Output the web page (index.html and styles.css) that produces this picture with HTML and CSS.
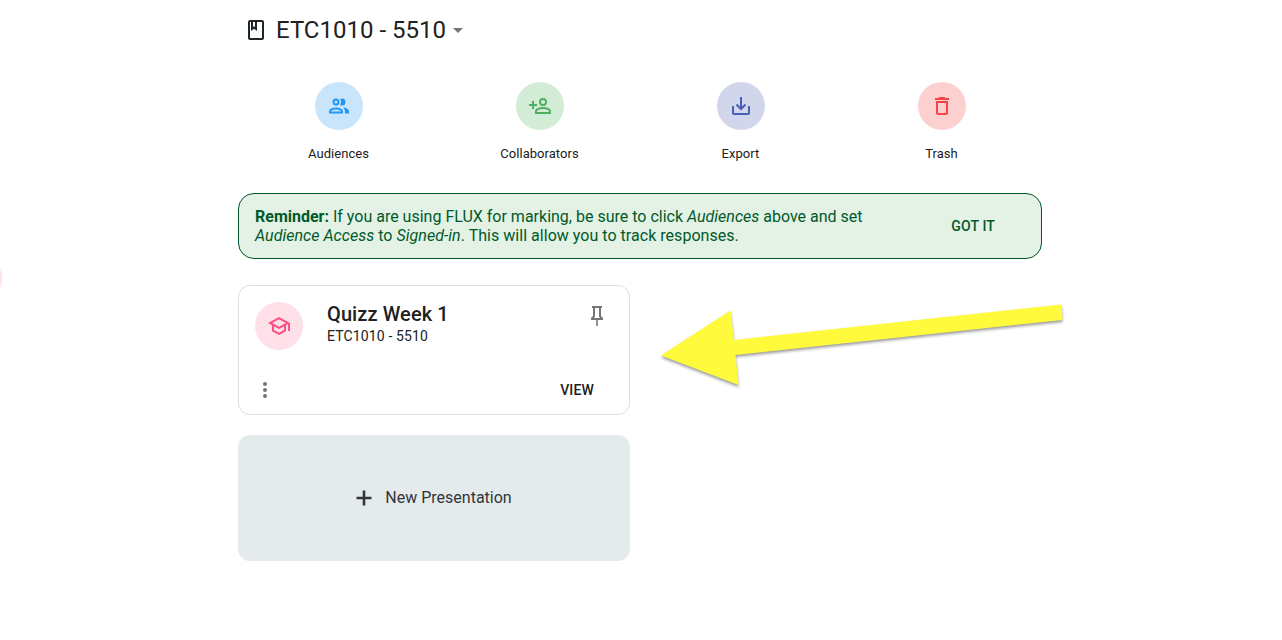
FILE: index.html
```html
<!DOCTYPE html>
<html lang="en">
<head>
<meta charset="utf-8">
<title>ETC1010 - 5510</title>
<link rel="stylesheet" href="styles.css">
</head>
<body>
<span class="edge-dot"></span>
<main class="page">
  <header class="title">
    <svg class="icon title-icon" viewBox="0 0 24 24"><path d="M18 2H6c-1.100 0-2 .9-2 2v16c0 1.100.9 2 2 2h12c1.100 0 2-.9 2-2V4c0-1.100-.9-2-2-2zM9 4h2v5l-1-.75L9 9V4zm9 16H6V4h1v9l3-2.250L13 13V4h5v16z"/></svg>
    <h1>ETC1010 - 5510</h1>
    <svg class="icon caret" viewBox="0 0 24 24"><path d="M7 10l5 5 5-5z"/></svg>
  </header>
  <nav class="actions">
    <a class="action"><span class="disc blue"><svg class="icon" viewBox="0 -0.500 24 24"><path d="M13.070 10.410A5 5 0 0 0 13.070 4.590A3.390 3.390 0 0 1 15 4A3.500 3.500 0 0 1 15 11A3.390 3.390 0 0 1 13.070 10.410M5.500 7.500A3.500 3.500 0 1 1 9 11A3.500 3.500 0 0 1 5.500 7.500M7.500 7.500A1.500 1.500 0 1 0 9 6A1.500 1.500 0 0 0 7.500 7.500M16 17V19H2V17S2 13 9 13 16 17 16 17M14 17C13.860 16.220 12.670 15 9 15S4.070 16.310 4 17M15.950 13A5.320 5.320 0 0 1 18 17V19H22V17S22 13.370 15.940 13Z"/></svg></span><span class="label">Audiences</span></a>
    <a class="action"><span class="disc green"><svg class="icon" viewBox="0 0 24 24"><path d="M15,4A4,4 0 0,0 11,8A4,4 0 0,0 15,12A4,4 0 0,0 19,8A4,4 0 0,0 15,4M15,5.900C16.160,5.900 17.100,6.840 17.100,8C17.100,9.160 16.160,10.100 15,10.100A2.100,2.100 0 0,1 12.900,8A2.100,2.100 0 0,1 15,5.900M4,7V10H1V12H4V15H6V12H9V10H6V7H4M15,13C12.330,13 7,14.330 7,17V20H23V17C23,14.330 17.670,13 15,13M15,14.900C17.970,14.900 21.100,16.360 21.100,17V18.100H8.900V17C8.900,16.360 12,14.900 15,14.900Z"/></svg></span><span class="label">Collaborators</span></a>
    <a class="action"><span class="disc indigo"><svg class="icon line" viewBox="0 0 24 24"><path d="M4 12v7a1 1 0 0 0 1 1h14a1 1 0 0 0 1-1v-7M12 3v12M7.500 10.500l4.500 4.500 4.500-4.500"/></svg></span><span class="label">Export</span></a>
    <a class="action"><span class="disc red"><svg class="icon" viewBox="0 0 24 24"><path d="M6,19A2,2 0 0,0 8,21H16A2,2 0 0,0 18,19V7H6V19M8,9H16V19H8V9M15.500,4L14.500,3H9.500L8.500,4H5V6H19V4H15.500Z"/></svg></span><span class="label">Trash</span></a>
  </nav>
  <section class="reminder">
    <p><b>Reminder:</b> If you are using FLUX for marking, be sure to click <i>Audiences</i> above and set<br><span class="second"><i>Audience Access</i> to <i>Signed-in</i>. This will allow you to track responses.</span></p>
    <button class="btn got-it">GOT IT</button>
  </section>
  <article class="card">
    <div class="card-head">
      <span class="disc pink"><svg class="icon" viewBox="0 0 24 24"><path d="M12 3L1 9L5 11.180V17.180L12 21L19 17.180V11.180L21 10.090V17H23V9L12 3M18.820 9L12 12.720L5.180 9L12 5.280L18.820 9M17 16L12 18.720L7 16V12.270L12 15L17 12.270V16Z"/></svg></span>
      <div class="card-text">
        <h2>Quizz Week 1</h2>
        <p>ETC1010 - 5510</p>
      </div>
      <svg class="icon pin" viewBox="0 0 24 24"><path d="M16,12V4H17V2H7V4H8V12L6,14V16H11.200V22H12.800V16H18V14L16,12M8.800,14L10,12.800V4H14V12.800L15.200,14H8.800Z"/></svg>
    </div>
    <div class="card-foot">
      <svg class="icon dots" viewBox="0 0 24 24"><circle cx="12" cy="6" r="2"/><circle cx="12" cy="12" r="2"/><circle cx="12" cy="18" r="2"/></svg>
      <button class="btn view">VIEW</button>
    </div>
  </article>
  <button class="new">
    <svg class="icon" viewBox="0 0 24 24"><path d="M10.700 4.500h2.600v6.200h6.200v2.600h-6.200v6.200h-2.600v-6.200H4.500v-2.600h6.200z"/></svg>
    <span>New Presentation</span>
  </button>
</main>
<svg class="arrow" viewBox="0 0 430 110"><path d="M11 65.500L80.500 20.500L84 50L411.500 14.500L412.500 30L85.500 65L88.500 95Z"/></svg>
</body>
</html>
```
FILE: styles.css
```css
* { box-sizing: border-box; }
body {
  margin: 0;
  height: 640px;
  overflow: hidden;
  position: relative;
  background: #fff;
  color: #212121;
  font-family: Roboto, "Liberation Sans", sans-serif;
}
h1, h2, p { margin: 0; }
.icon { width: 24px; height: 24px; flex: none; display: block; fill: currentColor; }
.line { fill: none; stroke: currentColor; stroke-width: 2; }
.page { width: 804px; margin-left: 238px; }
.title { display: flex; align-items: center; height: 60px; padding-left: 6px; }
.title h1 { margin-left: 8px; font-size: 24px; font-weight: 400; line-height: 32px; }
.title-icon { color: #1c262b; }
.caret { color: #757575; }
.actions { display: grid; grid-template-columns: repeat(4, 201px); padding-top: 22px; }
.action { display: flex; flex-direction: column; align-items: center; }
.disc { width: 48px; height: 48px; border-radius: 50%; display: flex; align-items: center; justify-content: center; flex: none; }
.blue { background: #c9e5fb; color: #2196f3; }
.green { background: #d3ecd5; color: #4caf61; }
.indigo { background: #d1d6eb; color: #4a5fbb; }
.red { background: #fdd0d0; color: #f94444; }
.pink { background: #ffdfe8; color: #ff4f86; }
.label { margin-top: 14px; font-size: 13px; line-height: 20px; letter-spacing: 0.04px; }
.reminder {
  display: flex;
  align-items: center;
  justify-content: space-between;
  height: 66px;
  margin-top: 29px;
  padding: 0 46px 0 16px;
  border: 1px solid #00592a;
  border-radius: 16px;
  background: #e3f2e5;
  color: #00592a;
}
.reminder p { font-size: 16px; line-height: 19px; white-space: nowrap; }
.second { letter-spacing: 0.03px; }
.btn { padding: 0; border: 0; background: none; color: inherit; font: 500 14px/20px Roboto, sans-serif; letter-spacing: 0.15px; }
.card { width: 392px; height: 130px; margin-top: 26px; padding: 16px; border: 1px solid #dedede; border-radius: 12px; }
.card-head { display: flex; height: 76px; }
.card-text { flex: 1; margin-left: 24px; }
.card h2 { font-size: 20px; font-weight: 500; line-height: 24px; letter-spacing: 0.1px; }
.card-text p { font-size: 14px; line-height: 20px; letter-spacing: 0.14px; }
.pin { margin: 2px 4px 0 0; color: #757575; }
.card-foot { display: flex; justify-content: space-between; padding: 0 19px 0 0; }
.dots { margin-left: -2px; color: #757575; }
.view { line-height: 24px; }
.new {
  display: flex;
  align-items: center;
  justify-content: center;
  gap: 9px;
  width: 392px;
  height: 126px;
  margin-top: 20px;
  padding: 0 4px 0 0;
  border: 0;
  border-radius: 12px;
  background: #e5eaed;
  color: #303639;
  font: 400 16px/24px Roboto, sans-serif;
}
.arrow { position: absolute; left: 650px; top: 290px; width: 430px; height: 110px; fill: #fffb3c; filter: drop-shadow(0 2px 1.500px rgba(0, 0, 0, 0.4)); overflow: visible; }
.edge-dot { position: absolute; left: -46px; top: 254px; width: 48px; height: 48px; border-radius: 50%; background: #ffdfe8; }
```
